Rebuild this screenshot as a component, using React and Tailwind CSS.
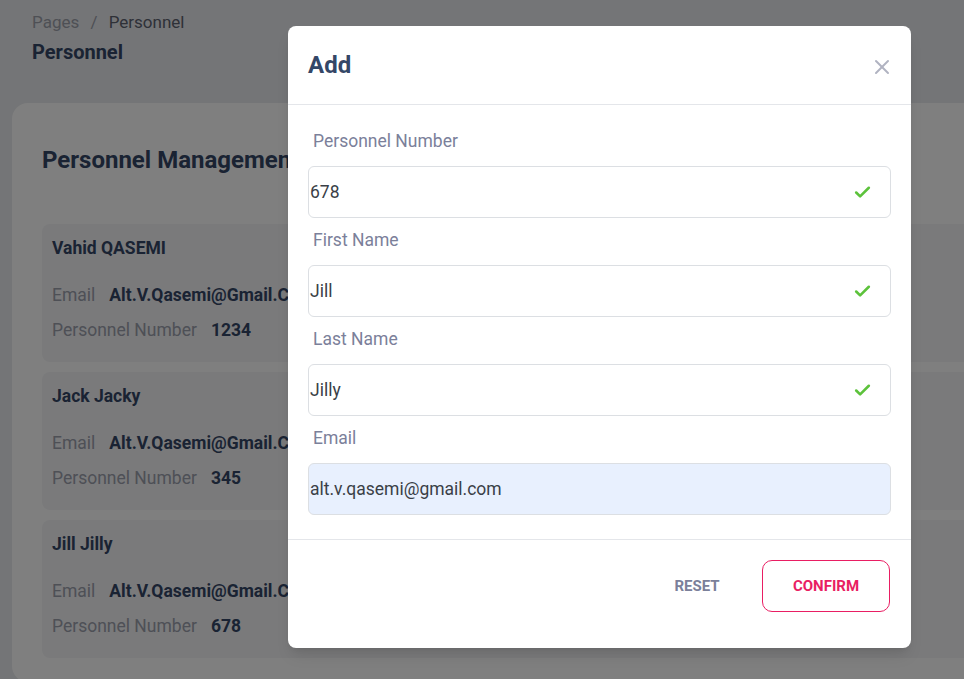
import React from 'react';
import { X, Check } from 'lucide-react';

const people = [
    { name: 'Vahid QASEMI', email: 'Alt.V.Qasemi@Gmail.Com', number: '1234' },
    { name: 'Jack Jacky', email: 'Alt.V.Qasemi@Gmail.Com', number: '345' },
    { name: 'Jill Jilly', email: 'Alt.V.Qasemi@Gmail.Com', number: '678' },
];

const fields = [
    { label: 'Personnel Number', value: '678', valid: true },
    { label: 'First Name', value: 'Jill', valid: true },
    { label: 'Last Name', value: 'Jilly', valid: true },
    { label: 'Email', value: 'alt.v.qasemi@gmail.com', autofill: true },
];

function PersonCard({ person }) {
    return (
        <div className="bg-[#f4f5f7] rounded-lg px-2.5 pt-3 pb-[20px]">
            <h4 className="text-[17.5px] leading-6 font-bold text-[#344767]">{person.name}</h4>
            <div className="mt-[23px] flex items-center gap-[14px] text-[17.5px] leading-6">
                <span className="text-[#9ca0ad]">Email</span>
                <span className="font-bold text-[#344767]">{person.email}</span>
            </div>
            <div className="mt-[11px] flex items-center gap-[14px] text-[17.5px] leading-6">
                <span className="text-[#9ca0ad]">Personnel Number</span>
                <span className="font-bold text-[#344767]">{person.number}</span>
            </div>
        </div>
    );
}

export default function App() {
    return (
        <div className="relative h-[679px] overflow-hidden bg-[#e9ebee] font-['Roboto',sans-serif]">
            <div className="px-8 pt-[10px]">
                <p className="text-[17px] leading-6 text-[#9ca0ab]">
                    Pages <span className="mx-[7px]">/</span> <span className="text-[#5d6270]">Personnel</span>
                </p>
                <h6 className="mt-[6px] text-[20px] leading-6 font-bold text-[#344767]">Personnel</h6>
            </div>

            <div className="ml-3 mt-[39px] w-[1000px] bg-white rounded-2xl px-[30px] pt-[41px] pb-6">
                <h2 className="text-[24px] leading-8 font-bold text-[#344767]">Personnel Management</h2>
                <div className="mt-[48px] flex flex-col gap-[10px]">
                    {people.map(p => <PersonCard key={p.name + p.number} person={p} />)}
                </div>
            </div>

            <div className="absolute inset-0 bg-black/50" />

            <div className="absolute left-[288px] top-[26px] w-[623px] bg-white rounded-lg shadow-lg">
                <div className="h-[79px] flex items-center justify-between px-5 border-b border-[#e4e6ea]">
                    <h3 className="text-[24px] font-bold text-[#344767]">Add</h3>
                    <X className="w-6 h-6 mt-1 mr-[-3px] text-[#b0b3c1]" strokeWidth={2} />
                </div>

                <div className="px-5 pt-6 pb-6 flex flex-col gap-[10px] border-b border-[#e4e6ea]">
                    {fields.map(f => (
                        <div key={f.label}>
                            <label className="block ml-[5px] text-[17.5px] leading-6 text-[#7b809a]">{f.label}</label>
                            <div className={`mt-[13px] h-[52px] flex items-center justify-between rounded-md border border-[#dcdfe3] pr-[18px] ${f.autofill ? 'bg-[#e8f0fe]' : 'bg-white'}`}>
                                <span className="pl-px text-[17.5px] text-[#3a3f47]">{f.value}</span>
                                {f.valid && <Check className="w-[19px] h-[19px] text-[#5cc23b]" strokeWidth={3.25} />}
                            </div>
                        </div>
                    ))}
                </div>

                <div className="flex justify-end items-center gap-[9px] pl-5 pr-[21px] pt-5 pb-9">
                    <button className="w-[112px] h-[52px] text-[15px] font-bold text-[#7b809a] uppercase">Reset</button>
                    <button className="w-[128px] h-[52px] rounded-[10px] border border-[#e91e63] text-[15px] font-bold text-[#e91e63] uppercase">Confirm</button>
                </div>
            </div>
        </div>
    );
}
